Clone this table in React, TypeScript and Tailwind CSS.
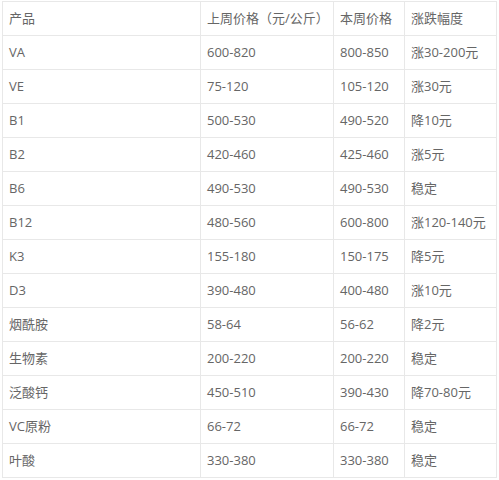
const header = ["产品", "上周价格（元/公斤）", "本周价格", "涨跌幅度"]

const rows: string[][] = [
  ["VA", "600-820", "800-850", "涨30-200元"],
  ["VE", "75-120", "105-120", "涨30元"],
  ["B1", "500-530", "490-520", "降10元"],
  ["B2", "420-460", "425-460", "涨5元"],
  ["B6", "490-530", "490-530", "稳定"],
  ["B12", "480-560", "600-800", "涨120-140元"],
  ["K3", "155-180", "150-175", "降5元"],
  ["D3", "390-480", "400-480", "涨10元"],
  ["烟酰胺", "58-64", "56-62", "降2元"],
  ["生物素", "200-220", "200-220", "稳定"],
  ["泛酸钙", "450-510", "390-430", "降70-80元"],
  ["VC原粉", "66-72", "66-72", "稳定"],
  ["叶酸", "330-380", "330-380", "稳定"],
]

function Row({ cells }: { cells: string[] }) {
  return (
    <>
      {cells.map((c, i) => (
        <div
          key={i}
          className="h-[34px] flex items-center pl-[6px] border-r border-b border-[#e8e8e8] whitespace-nowrap overflow-hidden"
        >
          {c}
        </div>
      ))}
    </>
  )
}

export default function App() {
  return (
    <div
      className="w-[499px] h-[480px] bg-white pt-[1px] pl-[2px] text-[13px] text-[#666]"
      style={{ fontFamily: '"Open Sans", "Noto Sans CJK SC", sans-serif' }}
    >
      <div className="grid grid-cols-[198px_133px_71px_92px] w-[495px] border-l border-t border-[#e8e8e8]">
        <Row cells={header} />
        {rows.map((r, i) => (
          <Row key={i} cells={r} />
        ))}
      </div>
    </div>
  )
}
